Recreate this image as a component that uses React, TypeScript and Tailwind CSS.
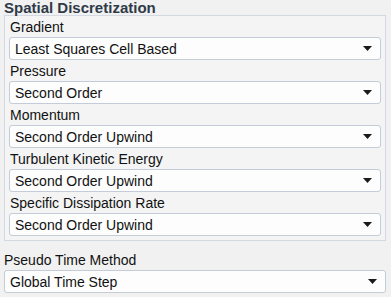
import React from "react";

const Arrow = () => (
  <svg width="9" height="5" viewBox="0 0 9 5" className="shrink-0">
    <path d="M0 0 H9 L4.5 5 Z" fill="#1a1a1a" />
  </svg>
);

const Select = ({ value }: { value: string }) => (
  <div className="flex h-[23px] items-center justify-between rounded-[3px] border border-[#c3ccd8] bg-[#fdfdfd] pl-[5px] pr-[8px]">
    <span className="text-[14px] leading-none text-[#111]">{value}</span>
    <Arrow />
  </div>
);

const Field = ({ label, value }: { label: string; value: string }) => (
  <div className="flex flex-col">
    <div className="h-[21px] pl-[1px] pt-[4px] text-[14px] leading-none text-[#111]">{label}</div>
    <Select value={value} />
  </div>
);

export default function App() {
  return (
    <div
      className="h-[297px] w-[391px] bg-[#f1f1f1] pl-[4px] pr-[5px]"
      style={{ fontFamily: '"Liberation Sans", Arial, sans-serif' }}
    >
      <div className="h-[15px] pt-[1px] text-[15px] font-bold leading-[14px] text-[#2f3a48]">Spatial Discretization</div>
      <div className="flex flex-col border border-[#d2d9e2] bg-[#f4f4f4] px-[4px] pb-[4px]">
        <Field label="Gradient" value="Least Squares Cell Based" />
        <Field label="Pressure" value="Second Order" />
        <Field label="Momentum" value="Second Order Upwind" />
        <Field label="Turbulent Kinetic Energy" value="Second Order Upwind" />
        <Field label="Specific Dissipation Rate" value="Second Order Upwind" />
      </div>
      <div className="mt-[9px] h-[20px] pt-[3px] text-[14px] leading-none text-[#111]">Pseudo Time Method</div>
      <Select value="Global Time Step" />
    </div>
  );
}
